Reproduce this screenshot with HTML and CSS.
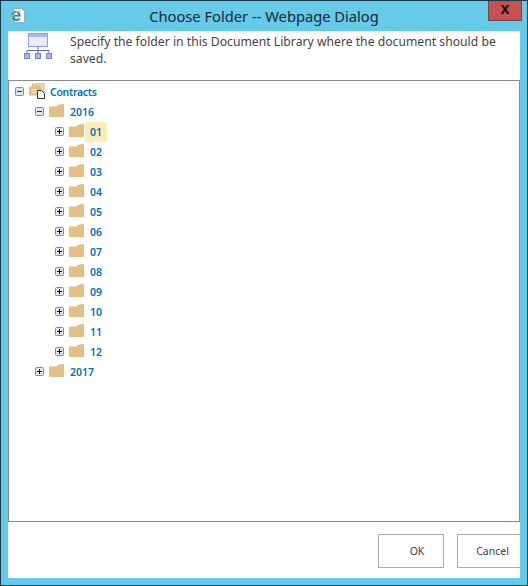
FILE: index.html
```html
<!DOCTYPE html>
<html lang="en">
<head>
  <meta charset="UTF-8" />
  <title>Choose Folder -- Webpage Dialog</title>
  <link rel="stylesheet" href="styles.css">
</head>
<body>
  <svg class="defs" width="0" height="0">
    <symbol id="folder" viewBox="0 0 15 13">
      <path d="M0 2.500h7.500L8.500 1l5-1h1.500v13H0z" fill="#e4bf84"/>
    </symbol>
    <symbol id="plus" viewBox="0 0 9 9">
      <rect x=".5" y=".5" width="8" height="8" rx="1" fill="#dfe6ec" stroke="#7d8b99"/>
      <path d="M2 4.500h5M4.500 2v5" stroke="#000"/>
    </symbol>
    <symbol id="minus" viewBox="0 0 9 9">
      <rect x=".5" y=".5" width="8" height="8" rx="1" fill="#dfe6ec" stroke="#7d8b99"/>
      <path d="M2 4.500h5" stroke="#333"/>
    </symbol>
  </svg>

  <div class="window">
    <div class="titlebar">
      <svg class="ie-icon" width="19" height="22" viewBox="-2 -3 19 22">
        <path d="M3.500 1.500h8l3 3v11h-11z" fill="#fff" stroke="#9aa8b0"/>
        <text x="1" y="14" class="ie-e">e</text>
        <path d="M1 13.500c0-4 5-10 10-10" fill="none" stroke="#e8c14a" stroke-width="1.200"/>
      </svg>
      <div class="title">Choose Folder -- Webpage Dialog</div>
      <div class="close">x</div>
    </div>

    <div class="content">
      <div class="intro">
        <svg class="site-icon" width="30" height="28" viewBox="0 0 30 28">
          <rect x="5.500" y="1.500" width="19" height="13" fill="#e9edf9" stroke="#8d9fdc"/>
          <rect x="6" y="2" width="18" height="3" fill="#a9b8ec"/>
          <path d="M15 14.500v7M4 21.500v-3h22v3" fill="none" stroke="#5a6f9f"/>
          <rect x="1.500" y="21.500" width="5" height="5" fill="#a9b8ec" stroke="#6f86d2"/>
          <rect x="12.500" y="21.500" width="5" height="5" fill="#a9b8ec" stroke="#6f86d2"/>
          <rect x="23.500" y="21.500" width="5" height="5" fill="#a9b8ec" stroke="#6f86d2"/>
        </svg>
        <p>Specify the folder in this Document Library where the document should be saved.</p>
      </div>

      <div class="tree">
        <ul>
          <li>
            <div class="node">
              <svg class="toggle"><use href="#minus"/></svg>
              <svg class="library-icon" width="16" height="16" viewBox="0 0 16 16">
                <path d="M3.500 1h4l1-1h6.500v10H3.500z" fill="#f0d7ac" stroke="#e0b87a"/>
                <path d="M0 3.500h5l1-1h6v10H0z" fill="#e4bf84"/>
                <path d="M3 6.500h4v3H3z" fill="none" stroke="#f7e9cf"/>
                <path d="M8.500 7.500h4l3 3v5h-7z" fill="#fff" stroke="#333"/>
              </svg>
              <span class="label root">Contracts</span>
            </div>
            <ul>
              <li>
                <div class="node">
                  <svg class="toggle"><use href="#minus"/></svg>
                  <svg class="folder"><use href="#folder"/></svg>
                  <span class="label">2016</span>
                </div>
                <ul>
                  <li><div class="node"><svg class="toggle"><use href="#plus"/></svg><svg class="folder"><use href="#folder"/></svg><span class="label selected">01</span></div></li>
                  <li><div class="node"><svg class="toggle"><use href="#plus"/></svg><svg class="folder"><use href="#folder"/></svg><span class="label">02</span></div></li>
                  <li><div class="node"><svg class="toggle"><use href="#plus"/></svg><svg class="folder"><use href="#folder"/></svg><span class="label">03</span></div></li>
                  <li><div class="node"><svg class="toggle"><use href="#plus"/></svg><svg class="folder"><use href="#folder"/></svg><span class="label">04</span></div></li>
                  <li><div class="node"><svg class="toggle"><use href="#plus"/></svg><svg class="folder"><use href="#folder"/></svg><span class="label">05</span></div></li>
                  <li><div class="node"><svg class="toggle"><use href="#plus"/></svg><svg class="folder"><use href="#folder"/></svg><span class="label">06</span></div></li>
                  <li><div class="node"><svg class="toggle"><use href="#plus"/></svg><svg class="folder"><use href="#folder"/></svg><span class="label">07</span></div></li>
                  <li><div class="node"><svg class="toggle"><use href="#plus"/></svg><svg class="folder"><use href="#folder"/></svg><span class="label">08</span></div></li>
                  <li><div class="node"><svg class="toggle"><use href="#plus"/></svg><svg class="folder"><use href="#folder"/></svg><span class="label">09</span></div></li>
                  <li><div class="node"><svg class="toggle"><use href="#plus"/></svg><svg class="folder"><use href="#folder"/></svg><span class="label">10</span></div></li>
                  <li><div class="node"><svg class="toggle"><use href="#plus"/></svg><svg class="folder"><use href="#folder"/></svg><span class="label">11</span></div></li>
                  <li><div class="node"><svg class="toggle"><use href="#plus"/></svg><svg class="folder"><use href="#folder"/></svg><span class="label">12</span></div></li>
                </ul>
              </li>
              <li>
                <div class="node">
                  <svg class="toggle"><use href="#plus"/></svg>
                  <svg class="folder"><use href="#folder"/></svg>
                  <span class="label">2017</span>
                </div>
              </li>
            </ul>
          </li>
        </ul>
      </div>

      <div class="actions">
        <button class="btn btn-ok">OK</button>
        <button class="btn btn-cancel">Cancel</button>
      </div>
    </div>
  </div>
</body>
</html>
```

FILE: styles.css
```css
* { box-sizing: border-box; margin: 0; padding: 0; }

body {
  font-family: 'Noto Sans', 'Open Sans', sans-serif;
  background: #65cbe9;
}

.defs { position: absolute; }

.window {
  width: 528px;
  height: 586px;
  display: flex;
  flex-direction: column;
  background: #65cbe9;
  border: 1px solid #17394a;
  padding: 0 7px 7px;
}

.titlebar {
  height: 30px;
  flex: none;
  display: grid;
  grid-template-columns: 1fr auto 1fr;
  align-items: start;
}

.ie-icon { margin: 3px 0 0 0; }

.ie-e {
  font-family: 'Liberation Sans', sans-serif;
  font-size: 18px;
  font-weight: bold;
  fill: #1e86cf;
}

.title {
  font-size: 14.7px;
  line-height: 30px;
  color: #1a2733;
  white-space: nowrap;
}

.close {
  justify-self: end;
  width: 34px;
  height: 20px;
  margin-right: -2px;
  background: #c75050;
  border: 1px solid #6b4a4a;
  border-top: 0;
  color: #111;
  font-family: 'Liberation Sans', sans-serif;
  font-size: 16px;
  font-weight: bold;
  line-height: 15px;
  text-align: center;
}

.content {
  flex: 1;
  min-height: 0;
  display: flex;
  flex-direction: column;
  background: #fff;
}

.intro {
  height: 49px;
  flex: none;
  display: flex;
  gap: 17px;
  padding-left: 15px;
}

.site-icon { flex: none; margin-top: 1px; }

.intro p {
  width: 440px;
  font-size: 12.2px;
  line-height: 17px;
  color: #444;
  padding-top: 2px;
}

.tree {
  flex: 1;
  border: 1px solid #8a8a8a;
  padding: 1px 0 0 6px;
}

.tree ul { list-style: none; }
.tree ul ul { padding-left: 20px; }

.node {
  display: flex;
  align-items: center;
  height: 20px;
}

.toggle { width: 9px; height: 9px; flex: none; margin: -1px 5px 0 0; }
.folder { width: 15px; height: 13px; flex: none; margin-top: -4px; }
.library-icon { flex: none; margin-top: -3px; margin-right: -1px; }

.label {
  padding: 0 5px;
  height: 20px;
  margin-left: 1px;
  font-size: 10.5px;
  font-weight: 600;
  line-height: 21px;
  color: #0072bc;
}

.root { letter-spacing: -0.3px; }
.selected { background: #fdedb5; }

.actions {
  height: 56px;
  flex: none;
  display: flex;
  gap: 13px;
  padding: 12px 0 0 370px;
  overflow: hidden;
}

.btn {
  flex: none;
  width: 66px;
  height: 34px;
  background: #fdfdfd;
  border: 1px solid #ababab;
  font-family: inherit;
  font-size: 10.5px;
  color: #444;
}

.btn-ok { padding-left: 12px; }
.btn-cancel { padding-left: 5px; }
```
